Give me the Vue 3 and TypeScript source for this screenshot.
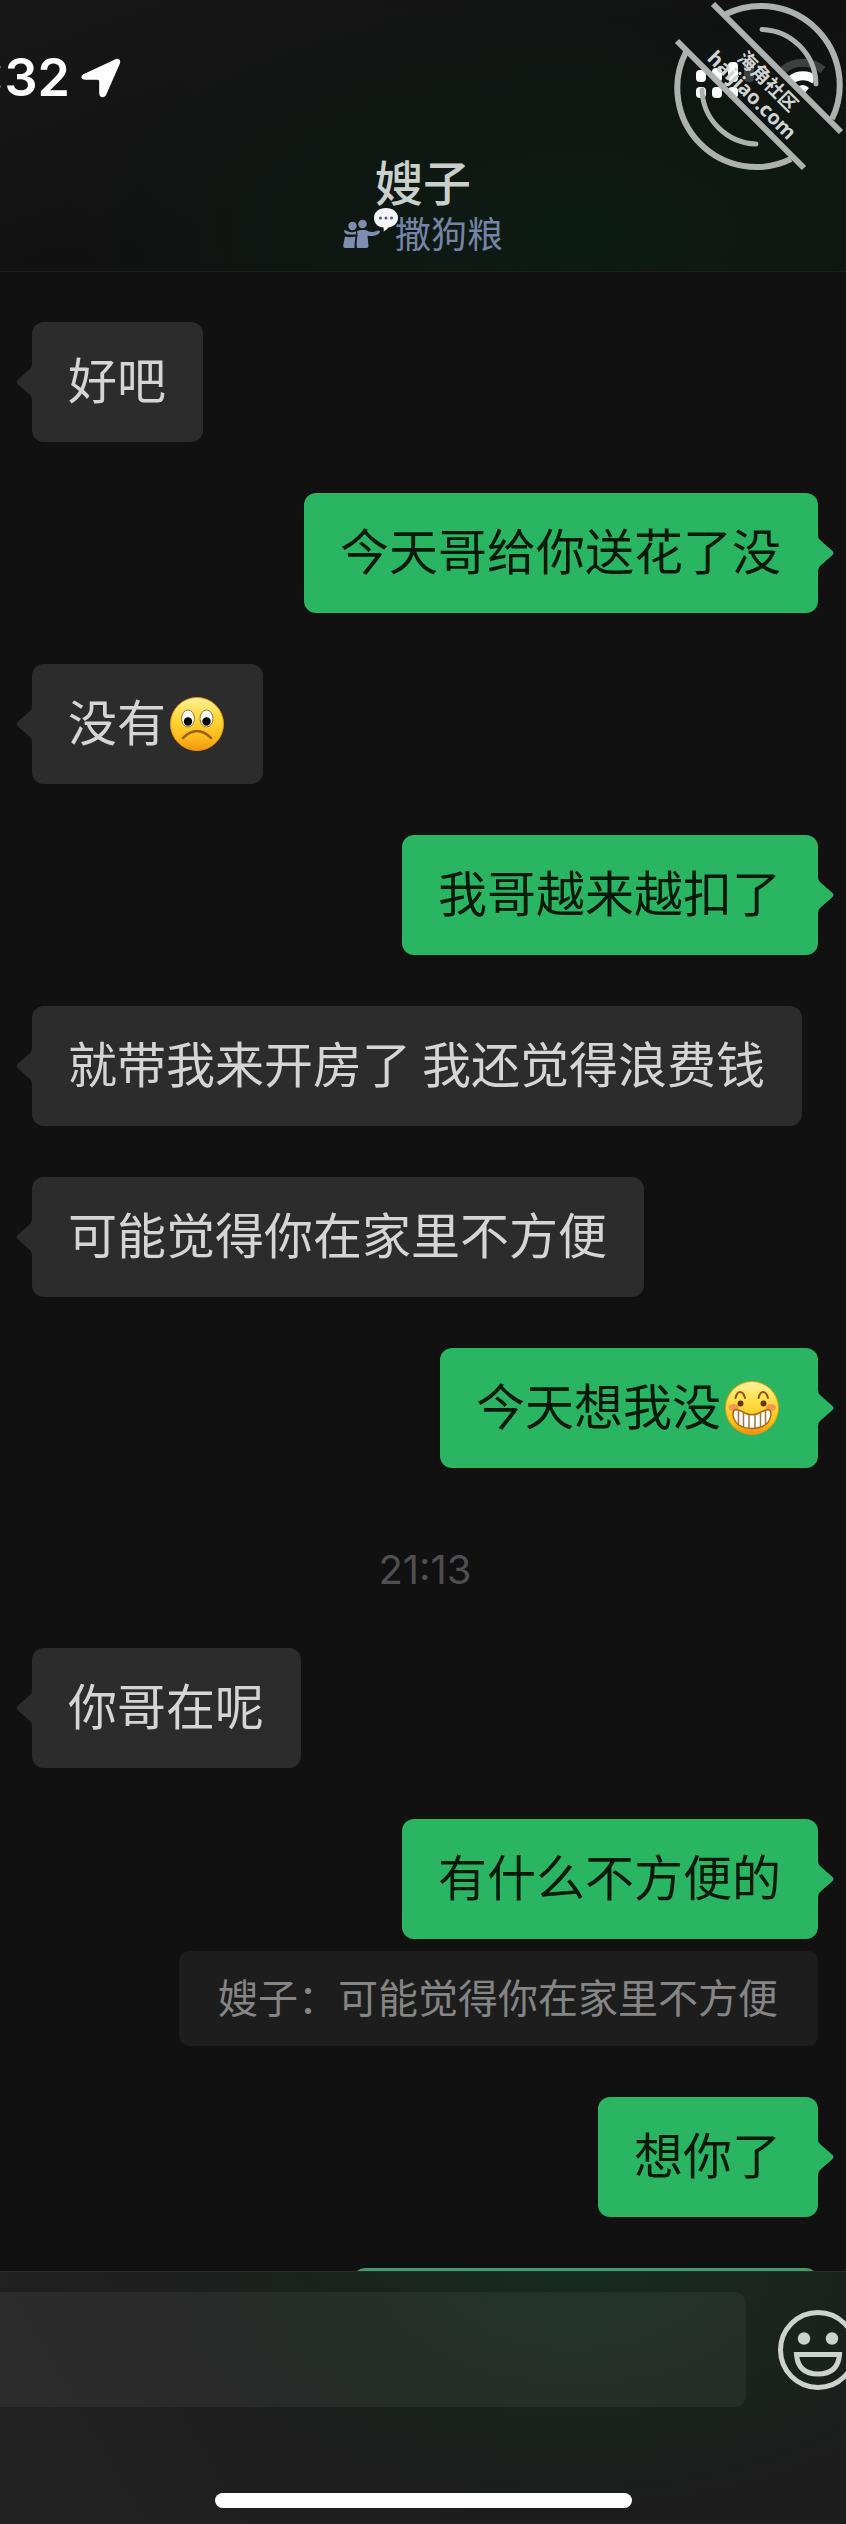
<script setup lang="ts">
type Emoji = 'frown' | 'grin'

interface Message {
  id: number
  side: 'in' | 'out'
  text: string
  emoji?: Emoji
  quote?: string
}

interface Section {
  time?: string
  messages: Message[]
}

const sections: Section[] = [
  {
    messages: [
      { id: 1, side: 'in', text: '好吧' },
      { id: 2, side: 'out', text: '今天哥给你送花了没' },
      { id: 3, side: 'in', text: '没有', emoji: 'frown' },
      { id: 4, side: 'out', text: '我哥越来越扣了' },
      { id: 5, side: 'in', text: '就带我来开房了 我还觉得浪费钱' },
      { id: 6, side: 'in', text: '可能觉得你在家里不方便' },
      { id: 7, side: 'out', text: '今天想我没', emoji: 'grin' },
    ],
  },
  {
    time: '21:13',
    messages: [
      { id: 8, side: 'in', text: '你哥在呢' },
      { id: 9, side: 'out', text: '有什么不方便的', quote: '嫂子：可能觉得你在家里不方便' },
      { id: 10, side: 'out', text: '想你了' },
    ],
  },
]
</script>

<template>
  <div class="phone">
    <header class="top">
      <div class="status">
        <div class="clock">
          <span class="clock-text">:32</span>
          <svg class="location" viewBox="0 0 40 40" aria-hidden="true">
            <path d="M4 15.500 34.500 1.200C37.500 0 40 2 39 5.200L25.300 36.500C23.800 40.500 18.200 40 18.200 35.500V23.500Q18.200 21.800 16.500 21.800H4.500C-.2 21.800-1.500 17.500 4 15.500Z" fill="#fff" />
          </svg>
        </div>
        <svg class="radio" viewBox="0 0 186 120" aria-hidden="true">
          <g fill="#fff">
            <rect x="36" y="70" width="10" height="12" rx="4" />
            <rect x="52" y="68" width="10" height="14" rx="4" />
            <rect x="68" y="62" width="10" height="20" rx="4" />
            <rect x="36" y="87" width="10" height="11" rx="4" />
            <rect x="52" y="87" width="10" height="11" rx="4" />
            <rect x="68" y="87" width="10" height="11" rx="4" />
          </g>
          <rect x="84" y="60" width="10" height="22" rx="4" fill="#3d403f" />
          <path d="M123 70A31 31 0 0 1 163 70" fill="none" stroke="#3d403f" stroke-width="8" />
          <path d="M131 80A19 19 0 0 1 155 80" fill="none" stroke="#fff" stroke-width="9" />
          <path d="M136 88Q143 82 149 88L143 95Z" fill="#fff" />
        </svg>
      </div>
      <div class="title">
        <h1>嫂子</h1>
        <p class="mood">
          <svg class="friends" viewBox="0 0 56 42" aria-hidden="true">
            <g fill="#7e8db0">
              <circle cx="9.500" cy="18" r="4.200" />
              <circle cx="19.500" cy="16" r="4.300" />
              <path d="M1 22.500Q2.500 21.500 4.500 23.200Q8 25 13 23.500V26.500H5Q1 25.500 1 22.500Z" />
              <path d="M2 28.500Q7 30 12.500 28.500Q11.500 34 11.500 40H2Q0 40 .3 37Z" />
              <path d="M14 23.500Q15 22 18 22H23Q27 25 32 23.500Q36.500 21.500 37 23.500Q37 26 32 27.500Q28 28.500 24.500 27.500L25.500 38Q25.500 40 23.500 40H14Q13 35 14.500 27.500Z" />
            </g>
            <path d="M43 0C50 0 55 4 55 9.800C55 15.500 50.500 18.700 45.500 19.500Q43.500 22 40.500 23.500Q41 21.500 40.500 19.500C34.500 19 31 15.500 31 9.800C31 4 36 0 43 0Z" fill="#f4f5f6" />
            <g fill="#53568c">
              <circle cx="37.500" cy="10" r="1.500" />
              <circle cx="43" cy="10" r="1.500" />
              <circle cx="48.500" cy="10" r="1.500" />
            </g>
          </svg>
          <span>撒狗粮</span>
        </p>
      </div>
      <svg class="stamp" viewBox="0 0 186 180" role="img" aria-label="海角社区 haijiao.com">
        <g fill="none" stroke="#adb1af" stroke-width="6">
          <path d="M53 4 181 132M17 41 144 168" />
          <path d="M66 14A79 79 0 0 1 172 119M26 52A79 79 0 0 0 131 159" />
          <path d="M102 29.500A56 56 0 0 1 156 84M42 90A56 56 0 0 0 96 144" stroke-linecap="round" stroke-width="5" />
        </g>
        <g fill="#d0d3d1" text-anchor="middle" font-weight="700">
          <text class="stamp-cn" transform="translate(103 86) rotate(45)">海角社区</text>
          <text class="stamp-url" transform="translate(87 100) rotate(45)">haijiao.com</text>
        </g>
      </svg>
    </header>

    <main class="chat">
      <section v-for="(section, i) in sections" :key="i" class="section">
        <time v-if="section.time" class="time">{{ section.time }}</time>
        <div v-for="m in section.messages" :key="m.id" class="message" :class="m.side">
          <div class="bubble">
            <svg class="tail" viewBox="0 0 16 36" aria-hidden="true">
              <path d="M0 0Q0 3 2 5L14 15.500Q17 18 14 20.500L2 31Q0 33 0 36Z" fill="currentColor" />
            </svg>
            <span class="words">{{ m.text }}</span>
            <svg v-if="m.emoji === 'frown'" class="emoji" viewBox="0 0 54 54" role="img" aria-label="难过">
              <defs>
                <linearGradient id="frown-face" x1="0" y1="0" x2="0" y2="1">
                  <stop offset="0" stop-color="#fff0a0" />
                  <stop offset=".35" stop-color="#ffdb3f" />
                  <stop offset=".75" stop-color="#fdbb1c" />
                  <stop offset="1" stop-color="#f2960d" />
                </linearGradient>
              </defs>
              <circle cx="27" cy="27" r="26.500" fill="url(#frown-face)" stroke="#eb970c" />
              <ellipse cx="18" cy="21.500" rx="6.500" ry="8.500" fill="#fff" stroke="#927834" />
              <ellipse cx="36.500" cy="21.500" rx="6.500" ry="8.500" fill="#fff" stroke="#927834" />
              <circle cx="18" cy="24.500" r="4.200" fill="#050505" />
              <circle cx="36.500" cy="24.500" r="4.200" fill="#050505" />
              <path d="M13 41Q27 27 41 41" fill="none" stroke="#99610d" stroke-width="2.500" stroke-linecap="round" />
            </svg>
            <svg v-if="m.emoji === 'grin'" class="emoji" viewBox="0 0 54 54" role="img" aria-label="呲牙">
              <defs>
                <linearGradient id="grin-face" x1="0" y1="0" x2="0" y2="1">
                  <stop offset="0" stop-color="#fff0a0" />
                  <stop offset=".35" stop-color="#ffe04a" />
                  <stop offset=".75" stop-color="#fdc21c" />
                  <stop offset="1" stop-color="#f28e0d" />
                </linearGradient>
              </defs>
              <circle cx="27" cy="27" r="26.500" fill="url(#grin-face)" stroke="#eb970c" />
              <ellipse cx="8.500" cy="26.500" rx="5" ry="3.500" fill="#f99550" />
              <ellipse cx="46" cy="26.500" rx="5" ry="3.500" fill="#f99550" />
              <g fill="none" stroke="#8c5208" stroke-width="2" stroke-linecap="round">
                <path d="M10.500 17Q12 11 15 11Q18.500 11 20 17M33.500 17Q35 11 38 11Q41.500 11 43 17" />
              </g>
              <circle cx="15.500" cy="22.500" r="3" fill="#653507" />
              <circle cx="38.500" cy="22.500" r="3" fill="#653507" />
              <path d="M11 28.500Q16 29.500 20 32Q27 35.500 34 32Q39 29.500 43 28.500Q46 28.500 46 34Q44 47 27 47.500Q10 47 8 34Q8 28.500 11 28.500Z" fill="#fff" stroke="#a7670d" stroke-width="1.500" />
              <path d="M13.500 30V43M18.500 31.500V46M24 34V47M30 34V47M35.500 31.500V46M40.500 30V43" stroke="#a5733a" stroke-width="1.500" />
            </svg>
          </div>
          <blockquote v-if="m.quote" class="quote">{{ m.quote }}</blockquote>
        </div>
      </section>
      <div class="message out">
        <div class="bubble peek"></div>
      </div>
    </main>

    <footer class="composer">
      <div class="entry">
        <input type="text" aria-label="消息" />
        <button type="button" aria-label="表情">
          <svg viewBox="0 0 80 80" aria-hidden="true">
            <circle cx="40" cy="40" r="37.500" fill="none" stroke="#cdd2cf" stroke-width="5" />
            <circle cx="26" cy="28.500" r="6.200" fill="#cdd2cf" />
            <circle cx="54" cy="28.500" r="6.200" fill="#cdd2cf" />
            <path d="M18.500 44.500H61.500Q60 64 40 64Q20 64 18.500 44.500Z" fill="none" stroke="#cdd2cf" stroke-width="5" />
          </svg>
        </button>
      </div>
      <div class="home"></div>
    </footer>
  </div>
</template>

<style>
body {
  margin: 0;
  background: #111;
}
</style>

<style scoped>
.phone {
  display: flex;
  flex-direction: column;
  height: 100vh;
  overflow: hidden;
  background: #111;
  color: #d5d5d5;
  font-family: 'Noto Sans CJK SC', sans-serif;
}

.top {
  position: relative;
  flex: none;
  padding-bottom: 15px;
  border-bottom: 1px solid #1d1f1e;
  background:
    radial-gradient(ellipse 60% 90% at 68% 85%, #0c1c13, #0c1c1300),
    linear-gradient(160deg, #181818, #111 50%);
}

.status {
  display: flex;
  justify-content: space-between;
  height: 120px;
}

.clock {
  display: flex;
  align-items: flex-start;
  gap: 11px;
  padding-top: 58px;
}

.clock-text {
  display: flex;
  justify-content: flex-end;
  width: 70px;
  overflow: hidden;
  color: #fff;
  font: 600 52px/40px Inter, sans-serif;
}

.location {
  width: 40px;
  height: 40px;
}

.radio {
  width: 186px;
  height: 120px;
}

.title {
  display: flex;
  flex-direction: column;
  align-items: center;
  padding-top: 32px;
}

h1 {
  margin: 0;
  color: #c9d0cb;
  font-size: 48px;
  font-weight: 500;
  line-height: 56px;
}

.mood {
  display: flex;
  align-items: center;
  margin: 0;
  color: #7584a6;
  font-size: 36px;
  line-height: 46px;
}

.friends {
  width: 56px;
  height: 42px;
  margin: 0 -4px 6px 0;
}

.stamp {
  position: absolute;
  top: 0;
  right: 0;
  width: 186px;
  height: 180px;
}

.stamp-cn {
  font-size: 19px;
}

.stamp-url {
  font-size: 20px;
  font-family: 'Noto Sans', sans-serif;
}

.chat {
  display: flex;
  flex: 1 1 0;
  flex-direction: column;
  gap: 51px;
  min-height: 0;
  padding: 50px 28px 0 32px;
  overflow: hidden;
}

.section {
  display: flex;
  flex: none;
  flex-direction: column;
  gap: 51px;
}

.time {
  align-self: center;
  padding-top: 24px;
  color: #4f4f4f;
  font: 40px/54px Inter, sans-serif;
}

.message {
  display: flex;
  flex: none;
  flex-direction: column;
  gap: 12px;
}

.in {
  align-items: flex-start;
}

.out {
  align-items: flex-end;
}

.bubble {
  position: relative;
  display: flex;
  align-items: center;
  box-sizing: border-box;
  min-height: 120px;
  padding: 0 37px 0 36px;
  border-radius: 12px;
}

.in .bubble {
  background: #2c2c2c;
}

.out .bubble {
  background: #29b561;
}

.words {
  padding-bottom: 8px;
  font-size: 49px;
  line-height: 60px;
}

.out .words {
  color: #03190b;
}

.tail {
  position: absolute;
  top: calc(50% - 18px);
  left: 100%;
  width: 16px;
  height: 36px;
  color: #29b561;
}

.in .tail {
  right: 100%;
  left: auto;
  color: #2c2c2c;
  transform: rotate(180deg);
}

.emoji {
  flex: none;
  width: 54px;
  height: 54px;
  margin: 0 2px 0 4px;
}

.quote {
  margin: 0;
  padding: 15px 40px 20px 39px;
  border-radius: 10px;
  background: #1d1d1d;
  color: #858585;
  font-size: 40px;
  line-height: 60px;
}

.out .peek {
  width: 465px;
  max-width: 100%;
  background: #3f9e66;
}

.composer {
  flex: none;
  border-top: 1px solid #2a2d2b;
  background:
    radial-gradient(ellipse 50% 95% at 68% 0, #172b1f, #172b1f00),
    linear-gradient(60deg, #222, #1d1d1d 50%);
}

.entry {
  display: flex;
  align-items: center;
  gap: 32px;
  margin-right: -12px;
  padding-top: 20px;
}

input {
  flex: 1;
  box-sizing: border-box;
  min-width: 0;
  height: 115px;
  padding: 0 36px;
  border: 0;
  border-radius: 0 12px 12px 0;
  outline: 0;
  background: #ffffff0d;
  color: #d5d5d5;
  font: inherit;
  font-size: 49px;
}

button {
  flex: none;
  width: 80px;
  height: 80px;
  padding: 0;
  border: 0;
  background: none;
}

button svg {
  display: block;
}

.home {
  width: 417px;
  height: 15px;
  margin: 86px auto 16px;
  border-radius: 8px;
  background: #fff;
}
</style>
